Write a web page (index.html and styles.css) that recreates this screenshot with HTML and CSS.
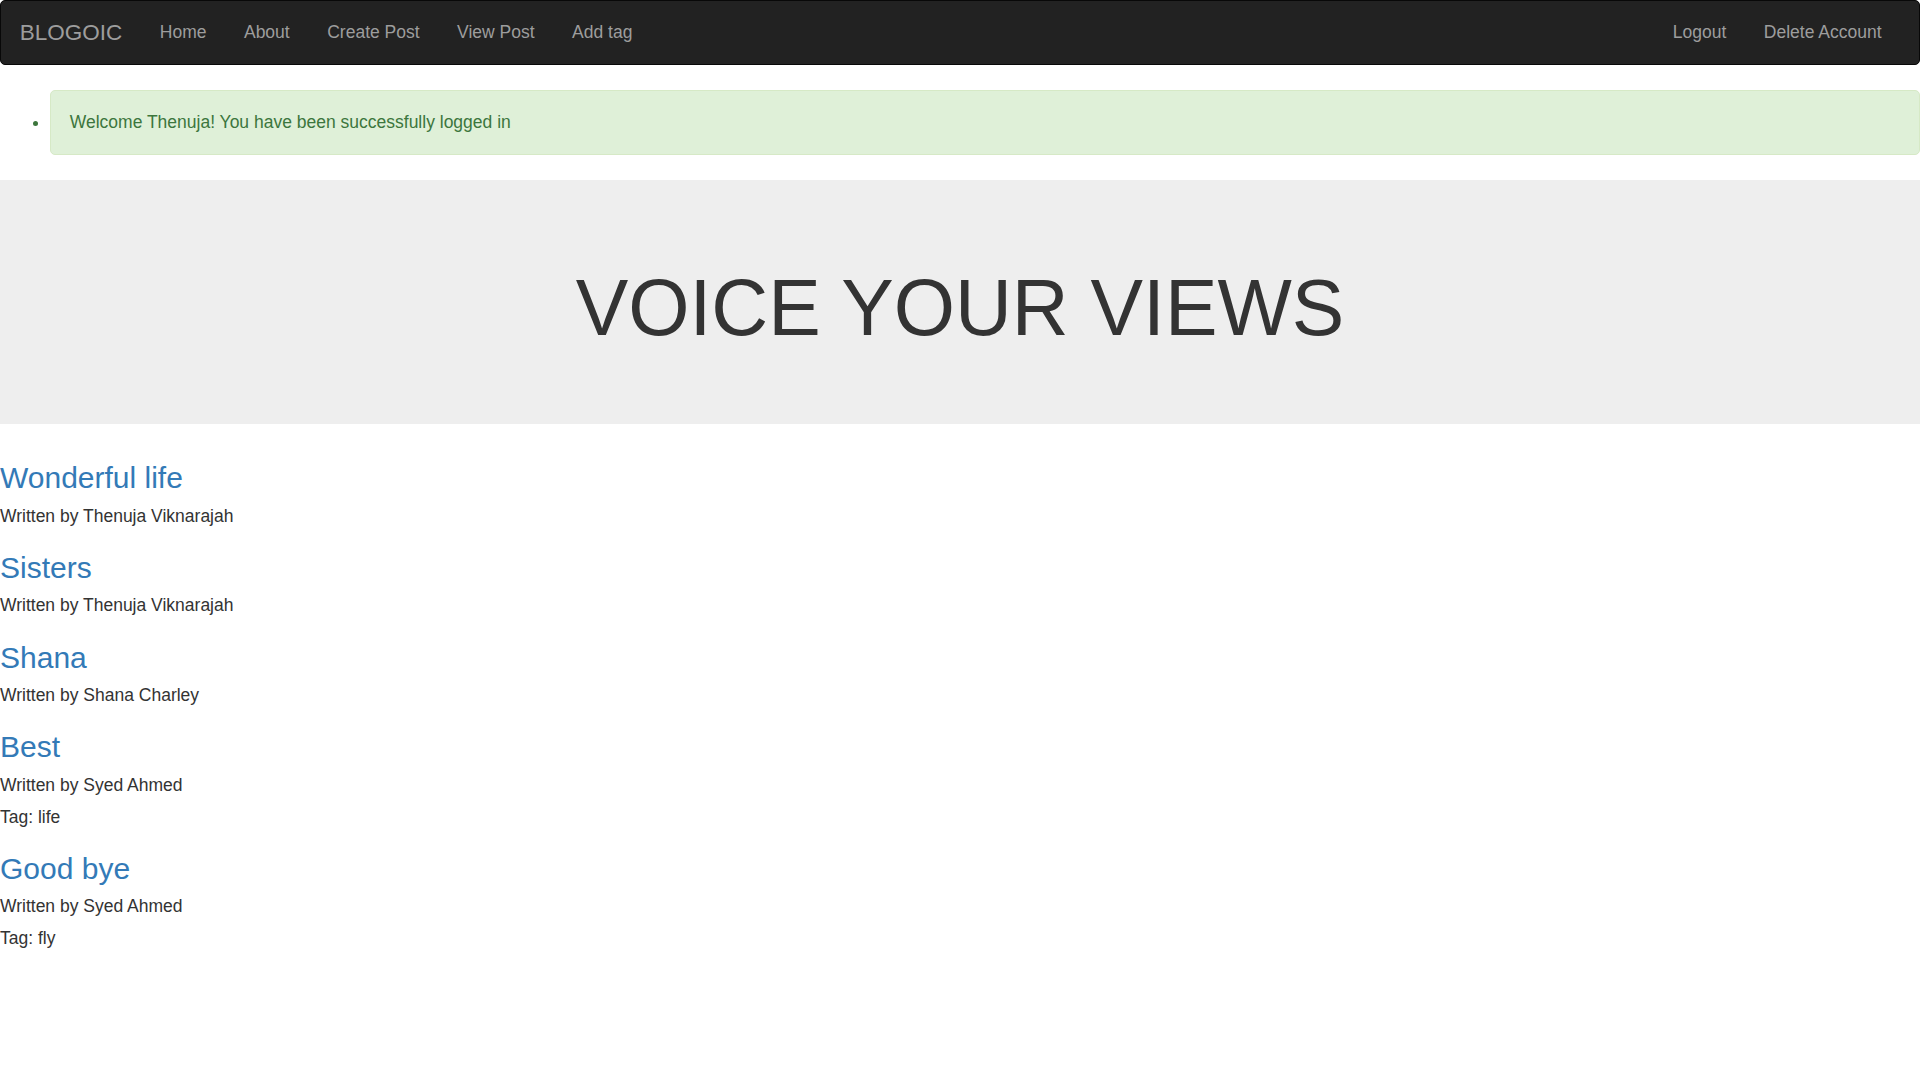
FILE: index.html
```html
<!DOCTYPE html>
<html lang="en">
<head>
<meta charset="utf-8">
<title>BLOGOIC</title>
<link rel="stylesheet" href="styles.css">
</head>
<body>
<nav class="navbar">
  <a class="brand" href="#">BLOGOIC</a>
  <ul class="nav">
    <li><a href="#">Home</a></li>
    <li><a href="#">About</a></li>
    <li><a href="#">Create Post</a></li>
    <li><a href="#">View Post</a></li>
    <li><a href="#">Add tag</a></li>
  </ul>
  <ul class="nav nav-right">
    <li><a href="#">Logout</a></li>
    <li><a href="#">Delete Account</a></li>
  </ul>
</nav>
<ul class="flashes">
  <li class="alert">Welcome Thenuja! You have been successfully logged in</li>
</ul>
<div class="jumbotron">
  <h1>VOICE YOUR VIEWS</h1>
</div>
<div class="posts">
  <h3 class="post-title"><a href="#">Wonderful life</a></h3>
  <h5 class="meta">Written by Thenuja Viknarajah</h5>
  <h3 class="post-title"><a href="#">Sisters</a></h3>
  <h5 class="meta">Written by Thenuja Viknarajah</h5>
  <h3 class="post-title"><a href="#">Shana</a></h3>
  <h5 class="meta">Written by Shana Charley</h5>
  <h3 class="post-title"><a href="#">Best</a></h3>
  <h5 class="meta">Written by Syed Ahmed</h5>
  <h5 class="meta">Tag: life</h5>
  <h3 class="post-title"><a href="#">Good bye</a></h3>
  <h5 class="meta">Written by Syed Ahmed</h5>
  <h5 class="meta">Tag: fly</h5>
</div>
</body>
</html>
```
FILE: styles.css
```css
html, body {
  margin: 0;
  padding: 0;
}
body {
  font-family: "Liberation Sans", Arial, sans-serif;
  font-size: 17.5px;
  line-height: 25px;
  color: #333;
  background: #fff;
}
a {
  text-decoration: none;
}
.navbar {
  display: flex;
  align-items: flex-start;
  min-height: 63px;
  background: #222;
  border: 1px solid #080808;
  border-radius: 5px;
  margin-bottom: 25px;
  padding-right: 18.75px;
}
.brand {
  display: block;
  padding: 18.75px;
  font-size: 22.5px;
  line-height: 25px;
  height: 25px;
  color: #9d9d9d;
}
.nav {
  display: flex;
  list-style: none;
  margin: 0;
  padding: 0;
}
.nav-right {
  margin-left: auto;
}
.nav a {
  display: block;
  padding: 18.75px;
  line-height: 25px;
  color: #9d9d9d;
}
.flashes {
  margin: 0 0 12.5px;
  padding-left: 50px;
}
.alert {
  padding: 18.75px;
  margin-bottom: 25px;
  border: 1px solid #d6e9c6;
  border-radius: 5px;
  background: #dff0d8;
  color: #3c763d;
}
.jumbotron {
  background: #eee;
  padding: 60px 0;
  margin-bottom: 37.5px;
}
.jumbotron h1 {
  margin: 25px 0 12.5px;
  font-size: 78.75px;
  line-height: 1.1;
  font-weight: 500;
  text-align: center;
  color: #333;
}
.post-title {
  margin: 25px 0 12.5px;
  font-size: 30px;
  line-height: 1.1;
  font-weight: 500;
}
.post-title a {
  color: #337ab7;
}
.meta {
  margin: 12.5px 0;
  font-size: 17.5px;
  line-height: 1.1;
  font-weight: 500;
  color: #333;
}
```
